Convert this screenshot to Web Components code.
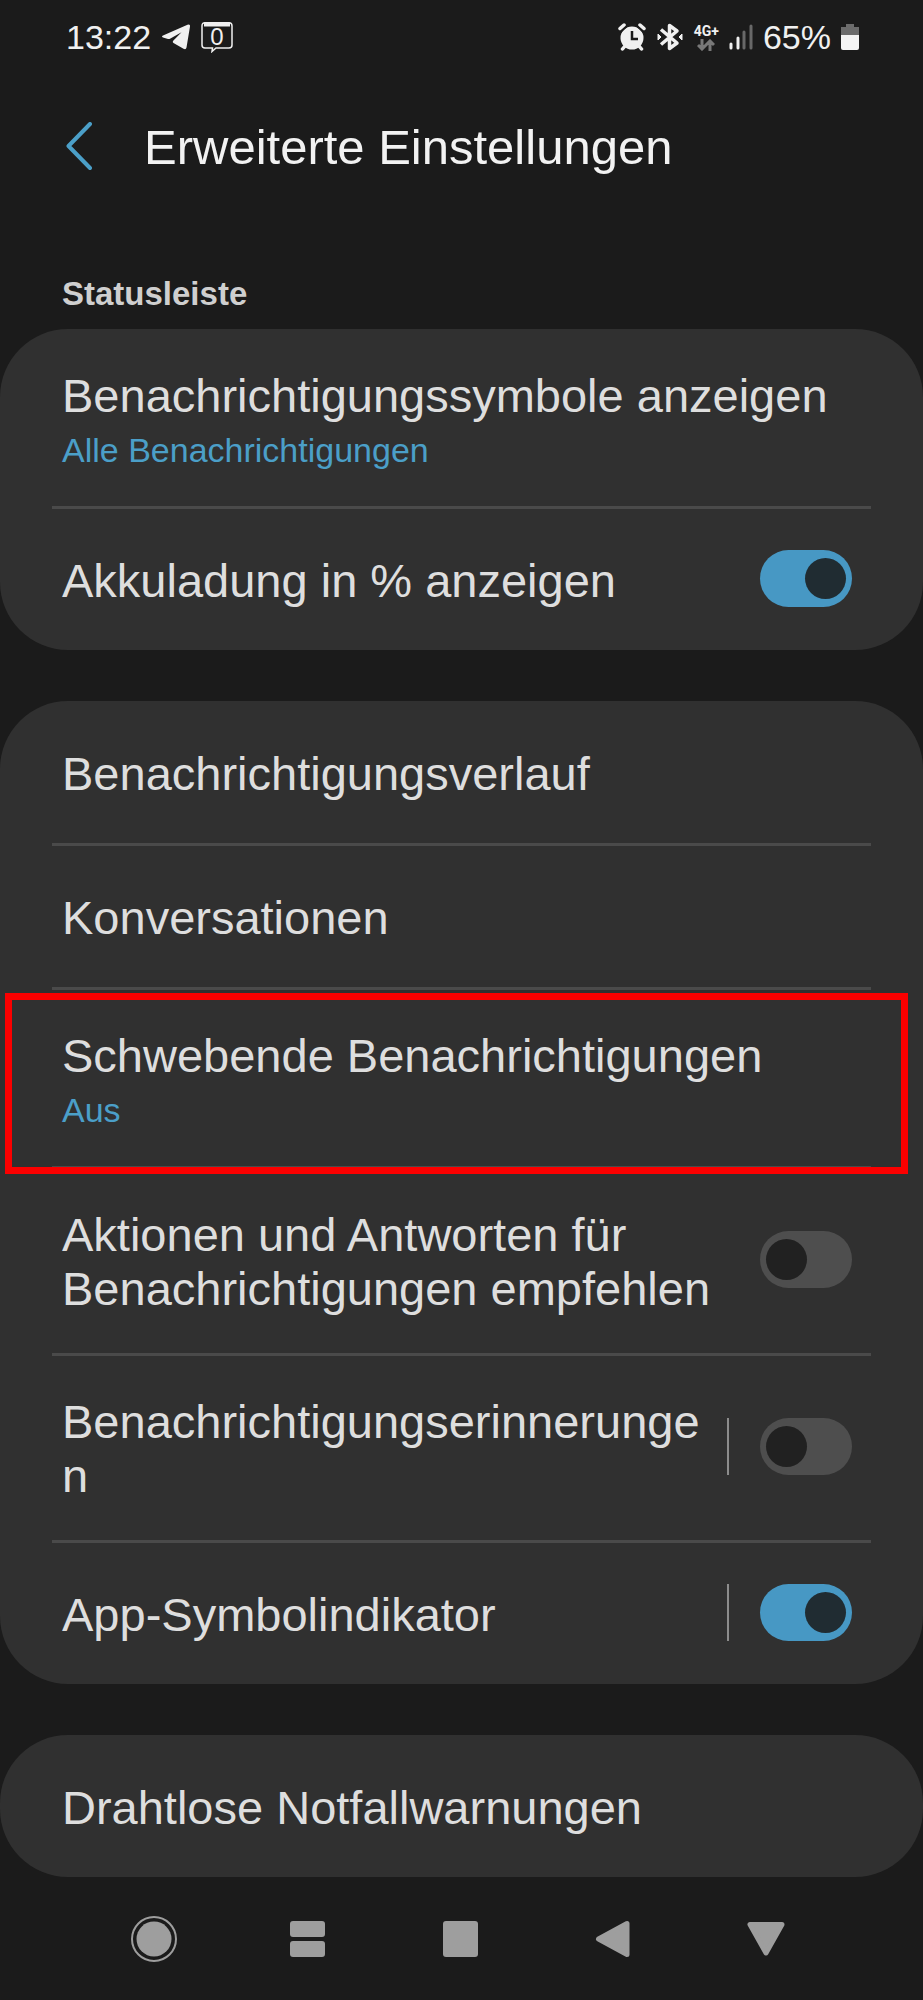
<!DOCTYPE html>
<html lang="de">
<head>
<meta charset="utf-8">
<meta name="viewport" content="width=device-width, initial-scale=1">
<title>Erweiterte Einstellungen</title>
<style>
  html {
    background: #1b1b1b;
  }
  body {
    margin: 0;
    color: #dedede;
    font-family: "Liberation Sans", Arial, sans-serif;
  }
</style>
</head>
<body>
<settings-screen>
  <status-bar slot="status" time="13:22" battery="65%"></status-bar>
  <page-header slot="header">Erweiterte Einstellungen</page-header>
  <settings-group heading="Statusleiste">
    <settings-item value="Alle Benachrichtigungen">Benachrichtigungssymbole anzeigen</settings-item>
    <settings-toggle checked>Akkuladung in % anzeigen</settings-toggle>
  </settings-group>
  <settings-group>
    <settings-item>Benachrichtigungsverlauf</settings-item>
    <settings-item>Konversationen</settings-item>
    <settings-item value="Aus" marked>Schwebende Benachrichtigungen</settings-item>
    <settings-toggle>Aktionen und Antworten für Benachrichtigungen empfehlen</settings-toggle>
    <settings-toggle split>Benachrichtigungserinnerungen</settings-toggle>
    <settings-toggle split checked>App-Symbolindikator</settings-toggle>
  </settings-group>
  <settings-group>
    <settings-item>Drahtlose Notfallwarnungen</settings-item>
  </settings-group>
  <nav-bar slot="nav"></nav-bar>
</settings-screen>

<script>
class ShadowElement extends HTMLElement {
  constructor () {
    super()
    this.root = this.attachShadow({ mode: 'open' })
  }

  connectedCallback () {
    this.root.innerHTML = this.render()
  }
}

customElements.define('settings-screen', class extends ShadowElement {
  render () {
    return `
    <style>
      :host {
        display: flex;
        flex-direction: column;
        min-height: 100vh;
      }
      main {
        display: flex;
        flex-direction: column;
        gap: 51px;
      }
    </style>
    <slot name="status"></slot>
    <slot name="header"></slot>
    <main><slot></slot></main>
    <slot name="nav"></slot>
    `
  }
})

customElements.define('status-bar', class extends ShadowElement {
  render () {
    return `
    <style>
      :host {
        display: flex;
        justify-content: space-between;
        align-items: center;
        height: 74px;
        padding: 0 64px 0 66px;
        color: #f0f0f0;
        font-size: 34px;
      }
      div {
        display: flex;
        align-items: center;
        gap: 10px;
      }
      .net {
        flex-direction: column;
        gap: 1px;
        font: bold 14px/14px Roboto, "Liberation Sans", sans-serif;
      }
      svg { display: block; }
    </style>
    <div>
      <span>${this.getAttribute('time')}</span>
      <svg width="30" height="26" viewBox="0 0 30 26" fill="#f0f0f0">
        <path d="M2 11.500 26.500 .8Q29.500 0 29 2.500L25.500 23.500Q25 26 22.500 24.700L12.500 19Q11 18 12.200 16.800L20.500 8.200 9 14.800Q8 15.300 7 15L2 13.500Q0 12.500 2 11.500Z"/>
      </svg>
      <svg width="32" height="32" viewBox="0 0 32 32" fill="none" stroke="#f0f0f0">
        <path d="M4 1.800H28Q31 1.800 31 5V24Q31 27 28 27H15L11 30.500 11.500 27H4Q1 27 1 24V5Q1 1.800 4 1.800Z" stroke-width="1.500"/>
        <path d="M3 3.500H29" stroke-width="4"/>
        <text x="16" y="24" font-size="24" text-anchor="middle" fill="#f0f0f0" stroke="none">0</text>
      </svg>
    </div>
    <div>
      <svg width="28" height="28" viewBox="0 0 28 28" fill="none" stroke="#f0f0f0" stroke-linecap="round">
        <circle cx="14" cy="15" r="11.500" fill="#f0f0f0" stroke="none"/>
        <path d="M2 5.500 6 2M26 5.500 22 2M4.500 26 7 23M23.500 26 21 23" stroke-width="3.500"/>
        <path d="M2.500 9.500 9 3M25.500 9.500 19 3" stroke="#1b1b1b" stroke-width="1.500"/>
        <path d="M14 8V16H20" stroke="#1b1b1b" stroke-width="2.500" stroke-linecap="butt"/>
      </svg>
      <svg width="28" height="28" viewBox="0 0 28 28" fill="none" stroke="#f0f0f0" stroke-width="3.500">
        <path d="M5 6.500 21 20 13.500 25.500V2.500L21 8 5 21.500" stroke-linejoin="round"/>
        <path d="M2 11 5 14 2 17ZM26 11 23 14 26 17Z" fill="#f0f0f0" stroke-width="1"/>
      </svg>
      <div class="net">
        <span>4G+</span>
        <svg width="18" height="12" viewBox="0 0 18 12" fill="none" stroke="#787878" stroke-width="3">
          <path d="M5 0V10M1 6 5 10 9 6M13 12V2M9 6 13 2 17 6"/>
        </svg>
      </div>
      <svg width="24" height="26" viewBox="0 0 24 26" stroke-width="3" stroke-linecap="round">
        <path d="M2 20V24M9 14V24" stroke="#f0f0f0"/>
        <path d="M15 8V24M22 2V24" stroke="#686868"/>
      </svg>
      <span>${this.getAttribute('battery')}</span>
      <svg width="18" height="28" viewBox="0 0 18 28">
        <path d="M5 1H13V4H18V12H0V4H5Z" fill="#6c6c6c"/>
        <path d="M0 12H18V25Q18 27 16 27H2Q0 27 0 25Z" fill="#f4f4f4"/>
      </svg>
    </div>
    `
  }
})

customElements.define('page-header', class extends ShadowElement {
  render () {
    return `
    <style>
      :host {
        display: flex;
        align-items: center;
        gap: 50px;
        height: 146px;
        padding: 0 64px;
        color: #f2f2f2;
      }
      button {
        display: flex;
        padding: 0;
        border: 0;
        background: none;
      }
      h1 {
        margin: 0;
        font-size: 49px;
        line-height: 54px;
        font-weight: normal;
      }
    </style>
    <button aria-label="Zurück">
      <svg width="30" height="50" viewBox="0 0 30 50" fill="none" stroke="#4b9fc8" stroke-width="4" stroke-linecap="round" stroke-linejoin="round">
        <path d="M26 2 4.500 24 26 46"/>
      </svg>
    </button>
    <h1><slot></slot></h1>
    `
  }
})

customElements.define('settings-group', class extends ShadowElement {
  render () {
    const heading = this.getAttribute('heading')
    return `
    <style>
      :host { display: block; }
      h2 {
        margin: 0;
        padding: 55px 62px 16px;
        color: #cfcfcf;
        font-size: 33px;
        line-height: 38px;
      }
      section {
        padding-top: 1px;
        border-radius: 68px;
        background: #303030;
      }
      ::slotted(:not(:last-child)) { --divider: 3px; }
    </style>
    ${heading ? `<h2>${heading}</h2>` : ''}
    <section><slot></slot></section>
    `
  }
})

const rowStyle = `
  :host {
    display: block;
    position: relative;
    font-size: 47px;
    line-height: 54px;
  }
  :host::after {
    content: '';
    display: block;
    height: var(--divider, 0);
    margin: 0 52px;
    background: #4a4a4a;
  }
  .row {
    display: flex;
    align-items: center;
    box-sizing: border-box;
    width: 100%;
    min-height: 141px;
    padding: 39px 71px 37px 62px;
  }
`

customElements.define('settings-item', class extends ShadowElement {
  render () {
    const value = this.getAttribute('value')
    return `
    <style>
      ${rowStyle}
      button {
        border: 0;
        background: none;
        color: inherit;
        font: inherit;
        text-align: left;
      }
      .text {
        display: flex;
        flex-direction: column;
        gap: 8px;
      }
      .value {
        color: #4b9fc8;
        font-size: 34px;
        line-height: 38px;
      }
      /* frame drawn over the row and its dividers */
      :host([marked])::before {
        content: '';
        position: absolute;
        inset: 3px 15px -5px 5px;
        border: 7px solid #fb0000;
        pointer-events: none;
        z-index: 1;
      }
    </style>
    <button class="row">
      <span class="text">
        <span><slot></slot></span>
        ${value ? `<span class="value">${value}</span>` : ''}
      </span>
    </button>
    `
  }
})

customElements.define('settings-toggle', class extends ShadowElement {
  render () {
    return `
    <style>
      ${rowStyle}
      label {
        flex: 1;
        min-width: 0;
        overflow-wrap: anywhere;
      }
      .control {
        display: flex;
        padding-left: 31px;
        margin: 0 0 5px 16px;
        border-left: 2px solid transparent;
      }
      :host([split]) .control { border-color: #8c8c8c; }
      input {
        appearance: none;
        display: flex;
        box-sizing: border-box;
        width: 92px;
        height: 57px;
        margin: 0;
        padding: 8px 6px;
        border-radius: 29px;
        background: #4e4e4e;
      }
      input::before {
        content: '';
        width: 41px;
        height: 41px;
        border-radius: 50%;
        background: #212121;
      }
      input:checked {
        justify-content: flex-end;
        background: #4798c4;
      }
      input:checked::before { background: #202c32; }
    </style>
    <div class="row">
      <label for="switch"><slot></slot></label>
      <span class="control">
        <input id="switch" type="checkbox" role="switch" ${this.hasAttribute('checked') ? 'checked' : ''}>
      </span>
    </div>
    `
  }
})

customElements.define('nav-bar', class extends ShadowElement {
  render () {
    return `
    <style>
      :host {
        display: grid;
        grid-template-columns: repeat(5, 1fr);
        align-items: center;
        flex: 1;
        padding: 0 80px 0 77px;
      }
      button {
        display: flex;
        justify-content: center;
        padding: 0;
        border: 0;
        background: none;
      }
    </style>
    <button aria-label="Aufnahme">
      <svg width="48" height="48" viewBox="0 0 48 48">
        <circle cx="24" cy="24" r="22" fill="none" stroke="#9e9e9e" stroke-width="2"/>
        <circle cx="24" cy="24" r="17.500" fill="#9e9e9e"/>
      </svg>
    </button>
    <button aria-label="Geteilter Bildschirm">
      <svg width="48" height="48" viewBox="0 0 48 48" fill="#9e9e9e">
        <rect x="7" y="6" width="35" height="16" rx="3"/>
        <rect x="7" y="26" width="35" height="16" rx="3"/>
      </svg>
    </button>
    <button aria-label="Startseite">
      <svg width="48" height="48" viewBox="0 0 48 48" fill="#9e9e9e">
        <rect x="7" y="6" width="35" height="36" rx="3"/>
      </svg>
    </button>
    <button aria-label="Zurück">
      <svg width="48" height="48" viewBox="0 0 48 48" fill="#9e9e9e" stroke="#9e9e9e" stroke-width="5" stroke-linejoin="round">
        <path d="M9.500 24 38 8.500V39.500Z"/>
      </svg>
    </button>
    <button aria-label="Ausblenden">
      <svg width="48" height="48" viewBox="0 0 48 48" fill="#9e9e9e" stroke="#9e9e9e" stroke-width="5" stroke-linejoin="round">
        <path d="M8 9.500H40L24 38Z"/>
      </svg>
    </button>
    `
  }
})
</script>
</body>
</html>
